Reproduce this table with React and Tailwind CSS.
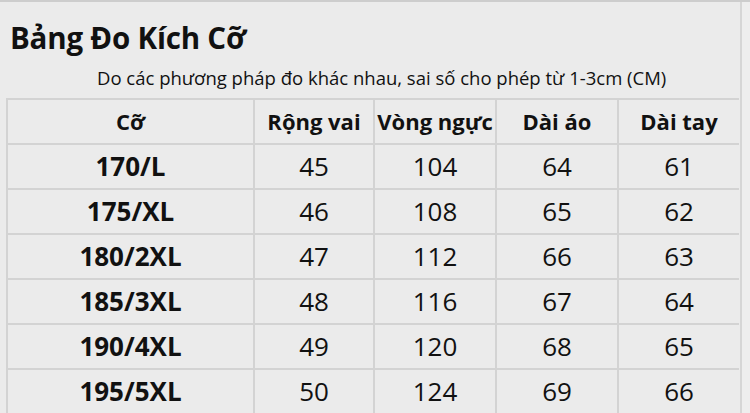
import React from 'react'

const headers = ['Cỡ', 'Rộng vai', 'Vòng ngực', 'Dài áo', 'Dài tay']

const rows = [
  ['170/L', 45, 104, 64, 61],
  ['175/XL', 46, 108, 65, 62],
  ['180/2XL', 47, 112, 66, 63],
  ['185/3XL', 48, 116, 67, 64],
  ['190/4XL', 49, 120, 68, 65],
  ['195/5XL', 50, 124, 69, 66],
]

export default function App() {
  return (
    <div className="w-[750px] h-[413px] overflow-hidden bg-[#ebebeb] border-t-2 border-[#cdcdcd] flex text-[#111]" style={{ fontFamily: '"Open Sans", "Noto Sans", sans-serif' }}>
      {/* Main */}
      <div className="w-[740px] flex-shrink-0 flex flex-col">
        <h1 className="mt-[21px] ml-[10px] text-[29.5px] leading-none font-bold tracking-[-0.2px]">Bảng Đo Kích Cỡ</h1>
        <p className="mt-[16px] ml-[97px] text-[18.5px] leading-none">Do các phương pháp đo khác nhau, sai số cho phép từ 1-3cm (CM)</p>

        {/* Table */}
        <div className="mt-[11px] ml-[6px] w-[733px] grid grid-cols-[245px_118px_120px_120px_120px] gap-[2px] p-[2px] bg-[#d3d3d3]">
          {headers.map(h => (
            <div key={h} className="h-[43px] bg-[#ebebeb] flex items-center justify-center text-[22px] font-bold">{h}</div>
          ))}
          {rows.map(r => (
            <React.Fragment key={r[0]}>
              <div className="h-[43px] bg-[#ebebeb] flex items-center justify-center text-[26px] font-bold">{r[0]}</div>
              {r.slice(1).map((v, i) => (
                <div key={i} className="h-[43px] bg-[#ebebeb] flex items-center justify-center text-[26px]">{v}</div>
              ))}
            </React.Fragment>
          ))}
        </div>
      </div>

      {/* Right edge strip */}
      <div className="flex-1 border-l-2 border-[#d6d6d6] bg-[#eeeeee]" />
    </div>
  )
}
